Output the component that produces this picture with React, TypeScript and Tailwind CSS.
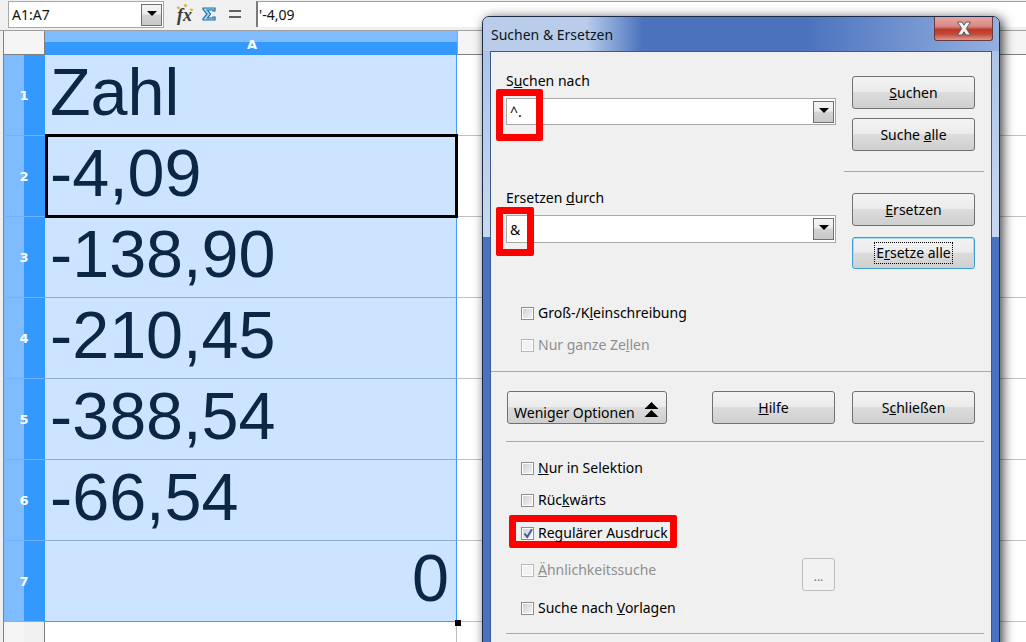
import React from "react";

const UI = "font-['Noto_Sans',sans-serif] text-[14px]";
const rows = ["Zahl", "-4,09", "-138,90", "-210,45", "-388,54", "-66,54", "0"];

function Drop() {
  return (
    <div className="ml-auto flex h-[22px] w-[21px] shrink-0 items-start justify-center border border-[#707070] bg-[linear-gradient(180deg,#f4f4f4_0%,#ececec_45%,#d4d4d4_50%,#c8c8c8_100%)] pt-[6px]">
      <div className="h-0 w-0 border-x-[5px] border-t-[5px] border-x-transparent border-t-black" />
    </div>
  );
}

function Btn({ children, w = "w-[123px]", focus = false, h = "h-[33px]" }: { children: React.ReactNode; w?: string; focus?: boolean; h?: string }) {
  return (
    <div
      className={`${w} ${h} flex shrink-0 items-center justify-center rounded-[3px] border text-black bg-[linear-gradient(180deg,#f3f3f3_0%,#ebebeb_48%,#dcdcdc_50%,#cfcfcf_100%)] ${
        focus ? "border-[#3c9fd0] shadow-[inset_0_0_0_1px_#a8ddf4]" : "border-[#707070]"
      }`}
    >
      <span className={focus ? "border border-dotted border-black px-[1px] leading-[20px]" : ""}>{children}</span>
    </div>
  );
}

function Box({ checked = false, disabled = false }: { checked?: boolean; disabled?: boolean }) {
  return (
    <div className={`relative h-[13px] w-[13px] shrink-0 border bg-white p-[1px] ${disabled ? "border-[#b8b8b8]" : "border-[#8e8e8e]"}`}>
      <div className={`h-full w-full ${disabled ? "bg-[#f2f2f2]" : "bg-[linear-gradient(135deg,#d2d2d2,#f2f2f2)]"}`} />
      {checked && (
        <svg viewBox="0 0 13 13" className="absolute left-0 top-[-1px] h-[13px] w-[13px]">
          <path d="M2.5 6.5 L5.2 10 L10 2.2" fill="none" stroke="#3f5a9c" strokeWidth="2" />
        </svg>
      )}
    </div>
  );
}

function Check({ children, checked, disabled, className = "" }: { children: React.ReactNode; checked?: boolean; disabled?: boolean; className?: string }) {
  return (
    <div className={`relative ml-[30px] flex h-5 items-center gap-[4px] leading-5 ${disabled ? "text-[#8f8f8f]" : "text-black"} ${className}`}>
      <Box checked={checked} disabled={disabled} />
      <span>{children}</span>
    </div>
  );
}

function Hr({ className }: { className: string }) {
  return <div className={`h-px bg-[#a8a8a8] ${className}`} />;
}

export default function App() {
  return (
    <div className="relative h-[642px] w-[1026px] overflow-hidden bg-white">
      {/* formula bar */}
      <div className={`${UI} flex h-[31px] items-start border-b border-[#a0a0a0] bg-[#f0f0f0] pl-[8px] pt-[1px] text-[#111]`}>
        <div className="flex h-[27px] w-[156px] items-center border border-[#a8a8a8] bg-white pl-[3px] pr-[1px]">
          <span>A1:A7</span>
          <Drop />
        </div>
        <div className="ml-[11px] flex h-[26px] items-center">
          <div className="relative h-[22px] w-[19px]">
            <span className="absolute left-[2px] top-[-1px] font-['Liberation_Serif',serif] text-[18px] font-bold italic text-[#3b3b3b]">fx</span>
            <svg viewBox="0 0 19 22" className="absolute inset-0 h-[22px] w-[19px]">
              <path d="M2 4l1 2 2-1-1-1zM9 2l1 2 2-1-1-2zM15 6l1 2 2-1-1-1z" fill="#f2c230" stroke="#c99a10" strokeWidth=".5" />
            </svg>
          </div>
          <svg viewBox="0 0 14 14" className="ml-[8px] h-[14px] w-[14px]">
            <path d="M1 1H13V4H11V3H5.5L8.5 7L5.5 11H11V10H13V13H1V11.6L5 7L1 2.4Z" fill="#a9d8f2" stroke="#1d6fa8" strokeWidth="1.2" />
          </svg>
          <svg viewBox="0 0 12 8" className="ml-[13px] h-[8px] w-[12px]">
            <rect x="0" y="0" width="12" height="2" fill="#5a6268" />
            <rect x="0" y="6" width="12" height="2" fill="#5a6268" />
          </svg>
        </div>
        <div className="ml-[15px] flex h-[26px] flex-1 items-center border-l-2 border-t border-l-[#7a7a7a] border-t-[#a0a0a0] bg-white pl-[1px]">
          '-4,09
        </div>
      </div>

      {/* sheet */}
      <div className="bg-[#f0f0f0] pl-[3px]">
        <div className="flex h-[24px] font-['DejaVu_Sans',sans-serif] text-[13px] font-bold text-white">
          <div className="w-[42px] border-x border-b border-x-[#808080] border-b-[#808080] bg-[#f5f5f5]" />
          <div className="flex w-[412px] items-end justify-center border-b border-b-[#3399ff] bg-[linear-gradient(180deg,#7fbcff_11px,#3399ff_11px)] pb-[3px] pl-[2px] leading-none">A</div>
          <div className="flex-1 border-b border-l border-b-[#808080] border-l-[#a0a0a0] bg-[#f5f5f5]" />
        </div>
        {rows.map((r, i) => (
          <div key={r} className="flex h-[81px]">
            <div className="flex w-[42px] items-center justify-center border-b border-l border-r border-b-[#6fb2ff] border-l-[#808080] border-r-[#3399ff] bg-[linear-gradient(90deg,#7fbcff_20px,#3399ff_20px)] pt-[1px] font-['DejaVu_Sans',sans-serif] text-[13px] font-bold text-white">
              {i + 1}
            </div>
            <div
              className={`w-[412px] border-b border-r border-r-[#3d9bff] bg-[#cce4ff] pb-[6px] font-['Liberation_Sans',sans-serif] text-[66.5px] leading-[74px] text-[#0c2745] ${
                i === 6 ? "border-b-[#3d9bff] pr-[7px] text-right" : "border-b-[#8fafd0] pl-[5px]"
              }`}
            >
              {r}
            </div>
            <div className="flex-1 border-b border-b-[#c0c0c0] bg-white" />
          </div>
        ))}
        <div className="flex h-[20px]">
          <div className="w-[42px] border-x border-x-[#808080] bg-[linear-gradient(90deg,#f5f5f5_20px,#f0f0f0_20px)]" />
          <div className="w-[412px] border-r border-r-[#c0c0c0] bg-white" />
          <div className="flex-1 bg-white" />
        </div>
      </div>

      {/* cell cursor and fill handle */}
      <div className="absolute left-[45px] top-[134px] h-[84px] w-[413px] border-[3px] border-black" />
      <div className="absolute left-[455px] top-[620px] h-[6px] w-[6px] bg-black" />

      {/* dialog */}
      <div className={`${UI} absolute left-[482px] top-[16px] h-[640px] w-[518px] rounded-t-[7px] border border-[#1c2b45] bg-[linear-gradient(180deg,#a9c1e6_0px,#c8d8f0_220px,#4a72c2_220px)] px-[7px] text-black shadow-[3px_2px_12px_rgba(0,0,0,0.75)]`}>
        <div className="relative -mx-[7px] flex h-[34px] items-start rounded-t-[6px] bg-[linear-gradient(90deg,#b9cdea_0%,#b9cdea_20%,#4a72bd_31%,#4a72bd_62%,#94b0df_100%)] pl-[8px] pt-[8px] leading-5 text-[#0a1420]">
          Suchen &amp; Ersetzen
          <div className="absolute right-[6px] top-0 flex h-[24px] w-[59px] items-center justify-center rounded-b-[3px] border border-t-0 border-[#6a3a40] bg-[linear-gradient(180deg,#e6a6a0_0%,#d98a84_40%,#b9392c_55%,#c64a3a_75%,#dc9a90_100%)]">
            <svg viewBox="0 0 16 15" className="h-[15px] w-[16px]">
              <path d="M1.5 1H6L8 4.2L10 1H14.5L10.3 7.5L14.5 14H10L8 10.8L6 14H1.5L5.7 7.5Z" fill="#f2f2f2" stroke="#5a5a62" strokeWidth="1" />
            </svg>
          </div>
        </div>

        <div className="h-[600px] border border-[#3a5a8c] bg-[#f0f0f0]">
          <div className="flex">
            <div className="ml-[15px] w-[330px] pt-[19px]">
              <div className="h-5 leading-5">S<u>u</u>chen nach</div>
              <div className="mt-[7px] flex h-[27px] items-center border border-[#a8a8a8] bg-white pl-[3px] pr-[1px]">
                <span>^.</span>
                <Drop />
              </div>
              <div className="mt-[63px] h-5 leading-5">Ersetzen <u>d</u>urch</div>
              <div className="mt-[7px] flex h-[28px] items-center border border-[#a8a8a8] bg-white pl-[3px] pr-[1px]">
                <span>&amp;</span>
                <Drop />
              </div>
            </div>
            <div className="ml-[16px] w-[123px] pt-[24px]">
              <Btn><u>S</u>uchen</Btn>
              <div className="mt-[9px]"><Btn>Suche <u>a</u>lle</Btn></div>
              <Hr className="-ml-[8px] mt-[20px] w-[140px]" />
              <div className="mt-[21px]"><Btn><u>E</u>rsetzen</Btn></div>
              <div className="mt-[11px]"><Btn focus h="h-[32px]">E<u>r</u>setze alle</Btn></div>
            </div>
          </div>

          <Check className="mt-[34px]">Groß-/K<u>l</u>einschreibung</Check>
          <Check disabled className="mt-[12px]">Nur ganze Ze<u>l</u>len</Check>
          <Hr className="mt-[16px]" />

          <div className="ml-[16px] mt-[19px] flex">
            <div className="flex h-[33px] w-[160px] items-center rounded-[3px] border border-[#707070] bg-[linear-gradient(180deg,#f3f3f3_0%,#ebebeb_48%,#dcdcdc_50%,#cfcfcf_100%)] pl-[6px] pt-[11px] leading-5">
              <span>Weniger Optionen</span>
              <svg viewBox="0 0 14 15" className="ml-[9px] mt-[-7px] h-[15px] w-[15px]">
                <path d="M7 0L14 7H0ZM7 8L14 15H0Z" fill="#000" />
              </svg>
            </div>
            <div className="ml-[45px]"><Btn><u>H</u>ilfe</Btn></div>
            <div className="ml-[17px]"><Btn>S<u>c</u>hließen</Btn></div>
          </div>
          <Hr className="ml-[15px] mt-[17px] w-[478px]" />

          <Check className="mt-[16px]"><u>N</u>ur in Selektion</Check>
          <Check className="mt-[12px]">Rüc<u>k</u>wärts</Check>
          <Check checked className="mt-[13px] z-10">Re<u>g</u>ulärer Ausdruck</Check>
          <div className="relative mt-[17px] mr-[156px] flex h-5">
            <Check disabled className="flex-1"><u>Ä</u>hnlichkeitssuche</Check>
            <div className="-mt-[2px] flex h-[33px] w-[33px] items-end justify-center rounded-[3px] border border-[#bdbdbd] bg-[#f2f2f2] pb-[5px] text-[12px] leading-4 text-[#777]">...</div>
          </div>
          <Check className="mt-[18px]">Suche nach <u>V</u>orlagen</Check>
          <Hr className="ml-[15px] mt-[15px] w-[478px]" />
        </div>
      </div>

      {/* red annotation frames */}
      <div className="absolute left-[496px] top-[89px] h-[52px] w-[47px] rounded-[2px] border-[7px] border-[#ff0000]" />
      <div className="absolute left-[496px] top-[207px] h-[49px] w-[38px] rounded-[2px] border-[7px] border-[#ff0000]" />
      <div className="absolute left-[509px] top-[515px] h-[33px] w-[168px] rounded-[2px] border-[7px] border-[#ff0000]" />
    </div>
  );
}
